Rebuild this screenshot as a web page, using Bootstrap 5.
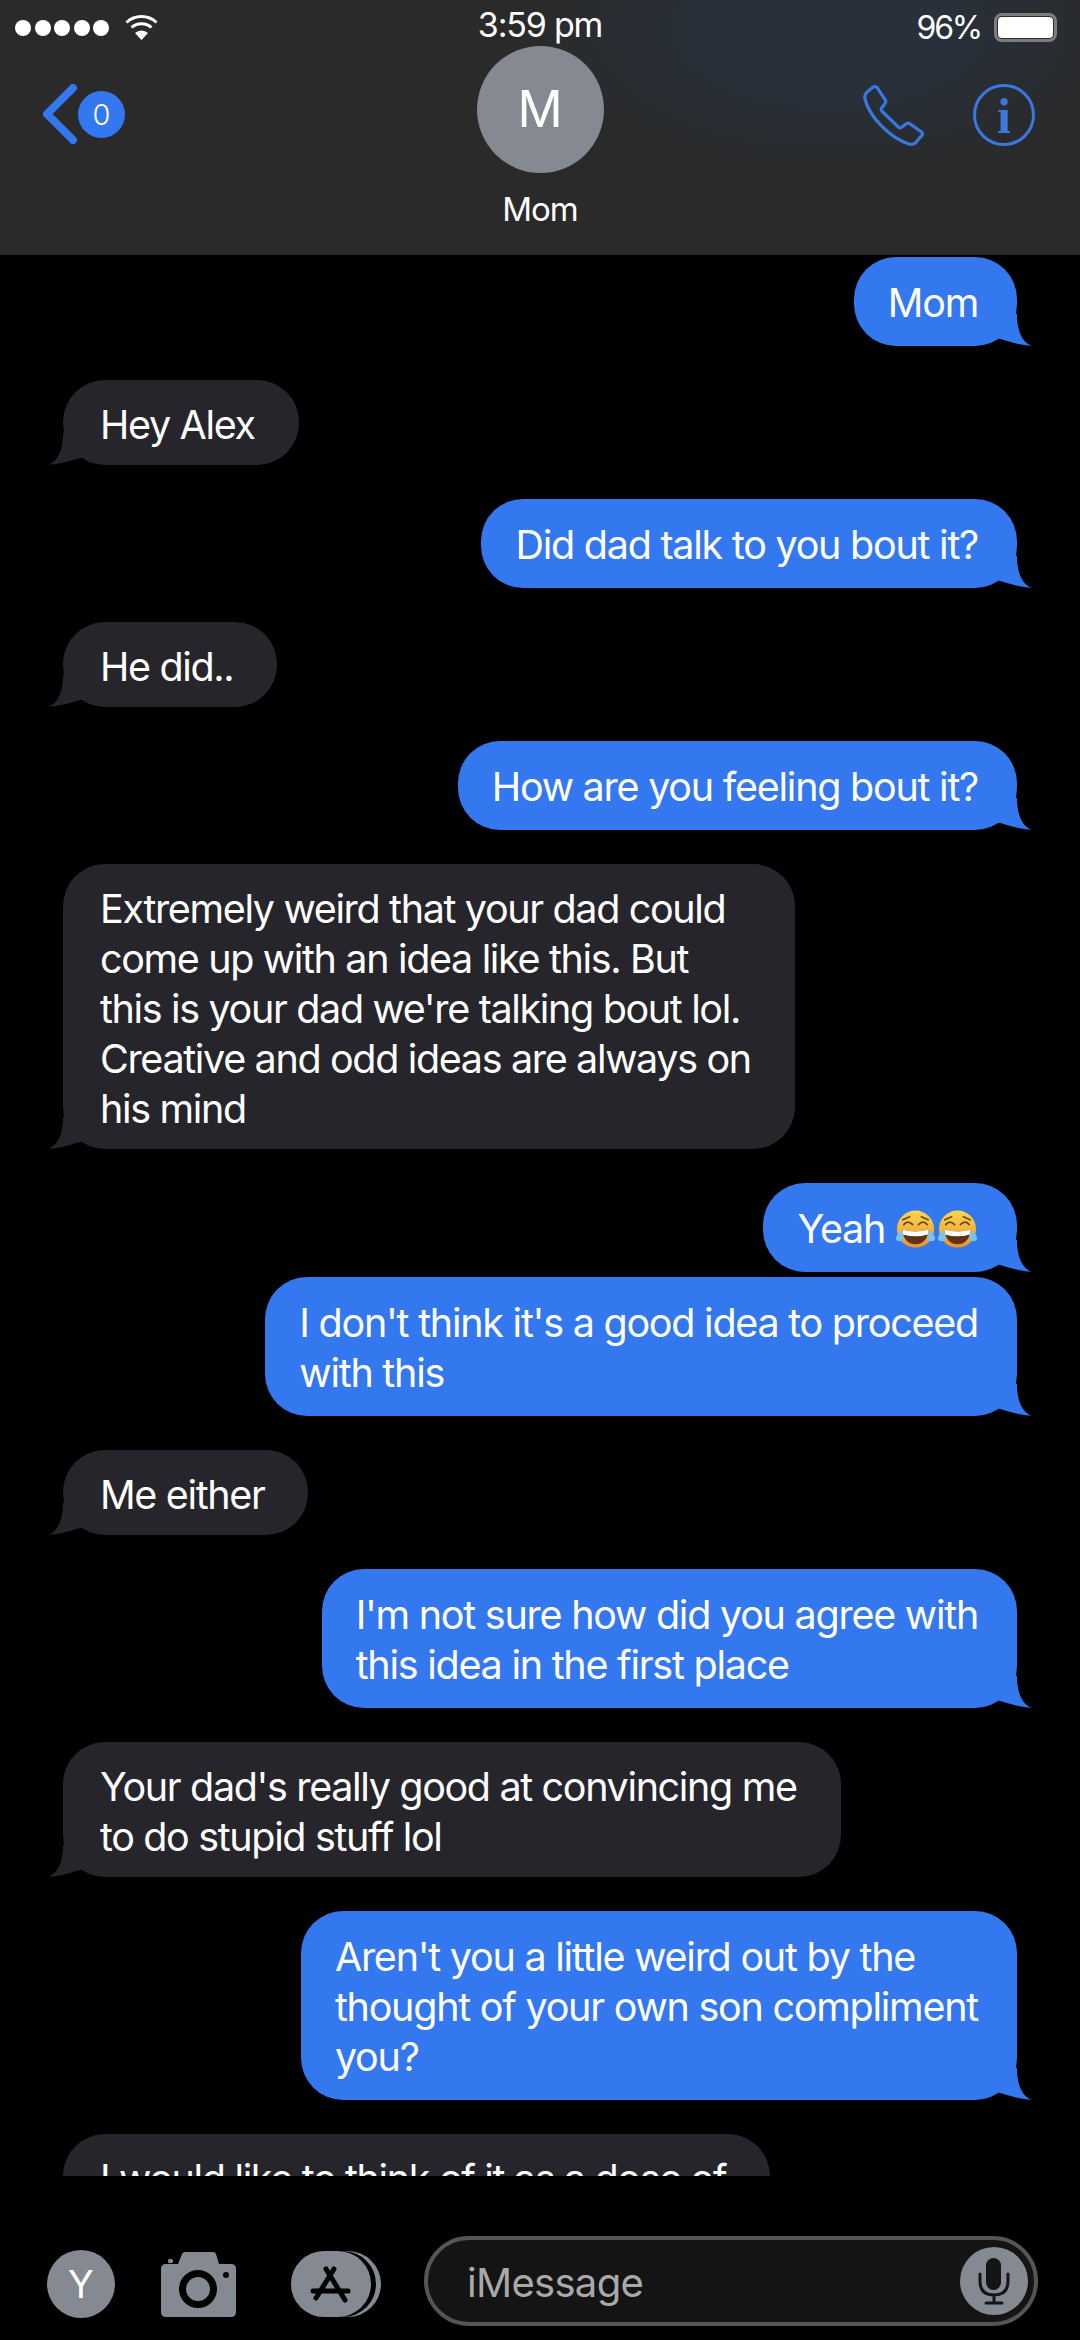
<!DOCTYPE html>
<html lang="en">
<head>
    <meta charset="UTF-8">
    <meta name="viewport" content="width=device-width, initial-scale=1.0">
    <title>Mom</title>
    <link href="https://cdn.jsdelivr.net/npm/bootstrap@5.3.0/dist/css/bootstrap.min.css" rel="stylesheet">
    <style>
        html, body { background: #000; }
        body { font-family: Inter, "Liberation Sans", sans-serif; color: #fff; }
        .phone-screen { width: 1080px; height: 2340px; background: #000; overflow: hidden; }

        /* header */
        .chat-header {
            height: 255px; flex: none; position: relative;
            background: radial-gradient(ellipse 300px 150px at 830px 30px, #27303b 0%, #27303b 35%, rgba(42,42,42,0) 100%), #2a2a2a;
        }
        .status-row { height: 46px; padding: 9px 23px 0 15px; }
        .signal-dot { width: 16px; height: 16px; border-radius: 50%; background: #fff; margin-right: 3.5px; }
        .wifi-icon { margin-left: 12px; }
        .status-time { font-size: 34px; line-height: 36px; letter-spacing: -1.2px; position: absolute; left: 0; right: 0; top: 7px; text-align: center; }
        .status-pct { font-size: 32px; line-height: 36px; letter-spacing: -2.2px; margin-right: 13px; }
        .battery-box { width: 63px; height: 29px; border: 3px solid #7d7d7d; border-radius: 8px; padding: 1px; }
        .battery-fill { width: 100%; height: 100%; background: #fff; border-radius: 4px; }

        .nav-row { padding: 38px 45px 0 43px; }
        .back-wrap { width: 200px; }
        .count-dot { width: 47px; height: 47px; border-radius: 50%; background: #3478f0; font-size: 29px; font-weight: 300; line-height: 47px; text-align: center; margin-top: 7px; }
        .contact-block { position: absolute; left: 0; right: 0; top: 46px; }
        .avatar-disc { width: 127px; height: 127px; border-radius: 50%; background: #858992; font-size: 50px; line-height: 127px; text-align: center; }
        .contact-name { font-size: 33px; line-height: 40px; margin-top: 16px; letter-spacing: -1px; }
        .info-gap { margin-left: 47px; }

        /* messages */
        .thread { height: 1921px; flex: none; overflow: hidden; padding: 2px 63px 0; }
        .msg-line { margin-top: 34px; }
        .msg-line.first-line { margin-top: 0; }
        .msg-line.tight { margin-top: 5px; }
        .bubble { position: relative; font-size: 39.5px; line-height: 50px; white-space: nowrap; border-radius: 42px; letter-spacing: -1.25px; }
        .bubble::after {
            content: ""; position: absolute; bottom: 0; width: 40px; height: 40px;
            background: inherit; clip-path: path("M25 8 C25 24 30 37 40 39.6 C28 39.6 15 35 5 32 L5 8 Z");
        }
        .bubble-out { background: #3478f0; padding: 20.5px 39px 18.5px 34px; }
        .bubble-out::after { right: -15px; }
        .bubble-in { background: #26252b; padding: 20px 44px 15px 37px; letter-spacing: -1.35px; }
        .bubble-in::after { left: -15px; transform: scaleX(-1); }
        .emoji-face { width: 41px; height: 41px; vertical-align: -7px; }
        .emoji-face + .emoji-face { margin-left: 1px; }

        /* composer */
        .composer { height: 164px; flex: none; padding: 60px 42px 14px 47px; }
        .composer-icons { margin-top: 14px; }
        .contact-me { width: 68px; height: 68px; border-radius: 50%; background: #858992; font-size: 38px; line-height: 68px; text-align: center; margin-right: 46px; }
        .camera-icon { margin-right: 55px; }
        .apps-icon { margin-right: 41px; }
        .message-box { height: 90px; flex: 1; border: 4px solid #555; border-radius: 45px; background: #141414; padding: 0 6px 0 39px; }
        .message-hint { font-size: 40px; color: #a9a9a9; letter-spacing: -.7px; padding-top: 4px; }
    </style>
</head>
<body>
    <div class="phone-screen d-flex flex-column">
        <!-- top bar -->
        <header class="chat-header">
            <div class="status-row d-flex align-items-center">
                <span class="signal-dot"></span><span class="signal-dot"></span><span class="signal-dot"></span><span class="signal-dot"></span><span class="signal-dot"></span>
                <svg class="wifi-icon" width="33" height="25" viewBox="0 0 33 25" fill="none" stroke="#fff" stroke-width="3">
                    <path d="M1.5 7.5A22 22 0 0 1 31.5 7.5"/>
                    <path d="M6.5 12.5A15 15 0 0 1 26.5 12.5"/>
                    <path d="M16.5 25L10 18A9.5 9.5 0 0 1 23 18Z" fill="#fff" stroke="none"/>
                </svg>
                <span class="status-pct ms-auto">96%</span>
                <div class="battery-box"><div class="battery-fill"></div></div>
            </div>
            <div class="status-time">3:59 pm</div>

            <div class="nav-row d-flex align-items-start justify-content-between">
                <div class="back-wrap d-flex align-items-start">
                    <svg width="35" height="60" viewBox="0 0 35 60" fill="none" stroke="#3478f0" stroke-width="8" stroke-linecap="round" stroke-linejoin="round">
                        <path d="M30 4L4 30L30 56"/>
                    </svg>
                    <div class="count-dot">0</div>
                </div>
                <div class="d-flex align-items-start">
                    <svg width="64" height="64" viewBox="60 45 200 200" fill="none" stroke="#3a78e0" stroke-width="10" stroke-linejoin="round">
                        <path d="M100 53Q107 53 110 60L134 97Q136 101 132 106L120 122Q118 126 122 130L174 180Q179 184 183 181L199 169Q204 165 209 169L246 195Q252 200 247 206L228 228Q220 236 205 232C150 215 85 150 70 95Q66 80 76 70L92 57Q96 53 100 53Z"/>
                    </svg>
                    <svg class="info-gap" width="62" height="62" viewBox="0 0 62 62">
                        <circle cx="31" cy="31" r="29.5" fill="none" stroke="#3a78e0" stroke-width="3"/>
                        <text x="31" y="49" text-anchor="middle" font-family="Liberation Serif, serif" font-weight="700" font-size="50" fill="#3a78e0">i</text>
                    </svg>
                </div>
            </div>

            <div class="contact-block d-flex flex-column align-items-center">
                <div class="avatar-disc">M</div>
                <div class="contact-name">Mom</div>
            </div>
        </header>

        <!-- conversation -->
        <main class="thread">
            <div class="msg-line first-line d-flex justify-content-end"><div class="bubble bubble-out">Mom</div></div>
            <div class="msg-line d-flex"><div class="bubble bubble-in">Hey Alex</div></div>
            <div class="msg-line d-flex justify-content-end"><div class="bubble bubble-out">Did dad talk to you bout it?</div></div>
            <div class="msg-line d-flex"><div class="bubble bubble-in">He did..</div></div>
            <div class="msg-line d-flex justify-content-end"><div class="bubble bubble-out">How are you feeling bout it?</div></div>
            <div class="msg-line d-flex"><div class="bubble bubble-in">Extremely weird that your dad could<br>come up with an idea like this. But<br>this is your dad we're talking bout lol.<br>Creative and odd ideas are always on<br>his mind</div></div>
            <div class="msg-line d-flex justify-content-end">
                <div class="bubble bubble-out">Yeah
                    <svg class="emoji-face" viewBox="0 0 42 42" role="img" aria-label="😂"><use href="#laughFace"/></svg><svg class="emoji-face" viewBox="0 0 42 42" role="img" aria-label="😂"><use href="#laughFace"/></svg>
                </div>
            </div>
            <div class="msg-line tight d-flex justify-content-end"><div class="bubble bubble-out">I don't think it's a good idea to proceed<br>with this</div></div>
            <div class="msg-line d-flex"><div class="bubble bubble-in">Me either</div></div>
            <div class="msg-line d-flex justify-content-end"><div class="bubble bubble-out">I'm not sure how did you agree with<br>this idea in the first place</div></div>
            <div class="msg-line d-flex"><div class="bubble bubble-in">Your dad's really good at convincing me<br>to do stupid stuff lol</div></div>
            <div class="msg-line d-flex justify-content-end"><div class="bubble bubble-out">Aren't you a little weird out by the<br>thought of your own son compliment<br>you?</div></div>
            <div class="msg-line d-flex"><div class="bubble bubble-in">I would like to think of it as a dose of<br>&nbsp;</div></div>
        </main>

        <!-- input row -->
        <footer class="composer d-flex align-items-start">
            <div class="composer-icons d-flex align-items-center">
                <div class="contact-me">Y</div>
                <svg class="camera-icon" width="75" height="65" viewBox="0 0 75 65">
                    <path d="M5 12H17L21 2Q22 0 24 0H52Q54 0 55 2L58 12H70Q75 12 75 17V60Q75 65 70 65H5Q0 65 0 60V17Q0 12 5 12Z" fill="#858992"/>
                    <rect x="7" y="7" width="5" height="4" rx="1.5" fill="#858992"/>
                    <circle cx="37" cy="37" r="15.5" fill="#858992" stroke="#000" stroke-width="7"/>
                    <circle cx="65" cy="23" r="3" fill="#000"/>
                </svg>
                <svg class="apps-icon" width="92" height="66" viewBox="0 0 92 66">
                    <rect x="0" y="0" width="90" height="66" rx="33" fill="#858992"/>
                    <rect x="0" y="0" width="85" height="66" rx="33" fill="#000"/>
                    <rect x="0" y="0" width="80" height="66" rx="33" fill="#858992"/>
                    <g stroke="#000" stroke-width="5" stroke-linecap="round">
                        <path d="M43 18L25 47M35 18L54 49M22 40H57"/>
                    </g>
                </svg>
            </div>
            <div class="message-box d-flex align-items-center justify-content-between">
                <span class="message-hint">iMessage</span>
                <svg width="68" height="68" viewBox="0 0 68 68">
                    <circle cx="34" cy="34" r="34" fill="#858992"/>
                    <rect x="26" y="11" width="15" height="32" rx="7.5" fill="#141414"/>
                    <path d="M20 27V34Q20 48 34 48Q48 48 48 34V27M34 48V56M26 56H42" fill="none" stroke="#141414" stroke-width="3" stroke-linecap="round"/>
                </svg>
            </div>
        </footer>
    </div>

    <!-- shared emoji face -->
    <svg width="0" height="0" class="position-absolute">
        <defs>
            <linearGradient id="faceFill" x1="0" y1="0" x2="0" y2="1">
                <stop offset="0" stop-color="#fcd750"/>
                <stop offset="1" stop-color="#e9922b"/>
            </linearGradient>
            <g id="laughFace">
                <circle cx="21" cy="20.5" r="19" fill="url(#faceFill)"/>
                <path d="M9 16Q13 11 18 16M24 16Q29 11 33 16M8 11L15 8M34 11L27 8" fill="none" stroke="#6b4720" stroke-width="1.8" stroke-linecap="round"/>
                <path d="M7.5 21Q21 25 34.5 21Q33 36 21 36Q9 36 7.5 21Z" fill="#5f3216"/>
                <path d="M7.5 21Q21 25 34.5 21L33.7 26Q21 30 8.3 26Z" fill="#fff"/>
                <path d="M6 22Q1 27 1 30Q1 33 5 33Q9 33 9 30Q9 26 6 22ZM36 22Q41 27 41 30Q41 33 37 33Q33 33 33 30Q33 26 36 22Z" fill="#7cc3ee"/>
            </g>
        </defs>
    </svg>
    <script src="https://cdn.jsdelivr.net/npm/bootstrap@5.3.0/dist/js/bootstrap.bundle.min.js"></script>
</body>
</html>
